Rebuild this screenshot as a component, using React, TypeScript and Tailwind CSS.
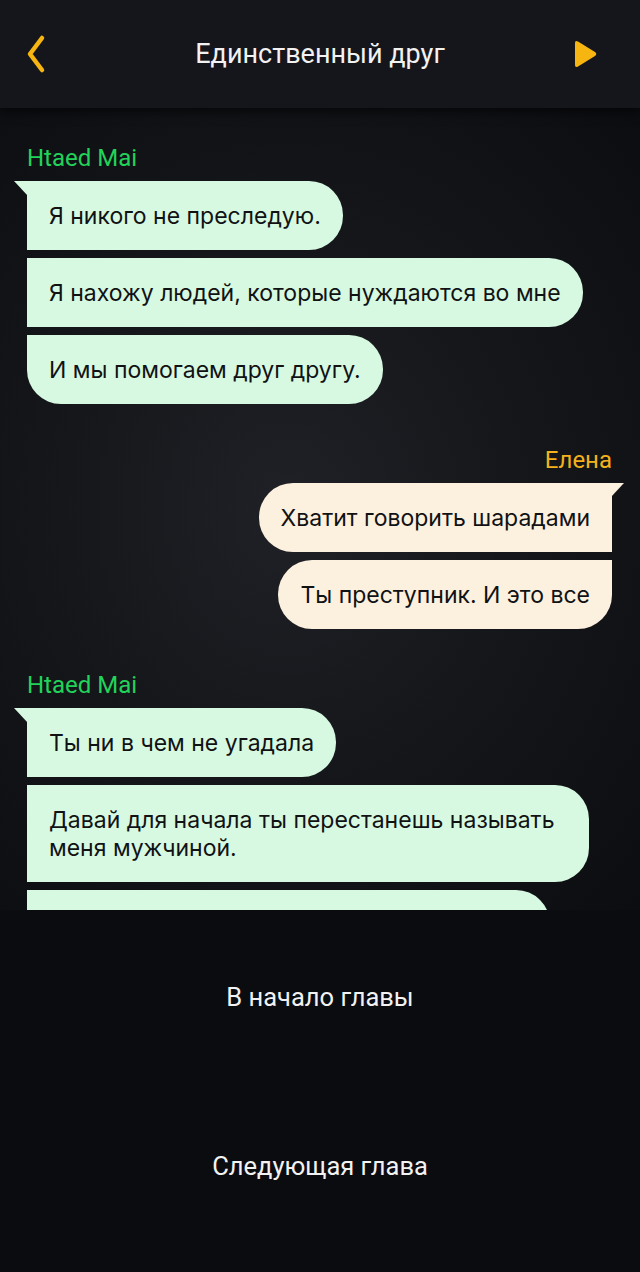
import React from "react";

type Side = "left" | "right";

function Tail({ side, color }: { side: Side; color: string }) {
  if (side === "left") {
    return (
      <svg className="absolute left-[-13px] top-0" width="14" height="15" viewBox="0 0 14 15">
        <path d="M14 0 H0 L14 15 Z" fill={color} />
      </svg>
    );
  }
  return (
    <svg className="absolute right-[-12px] top-0" width="13" height="14" viewBox="0 0 13 14">
      <path d="M0 0 H13 L0 14 Z" fill={color} />
    </svg>
  );
}

const GREEN = "#d8f9e1";
const CREAM = "#fcf0df";

const bubbleFont = { fontFamily: "Inter, 'Noto Sans', sans-serif" };

function LeftGroup({ name, msgs, clipLast }: { name: string; msgs: string[]; clipLast?: boolean }) {
  return (
    <div className="flex flex-col items-start pl-[27px]">
      <div className="text-[24px] leading-[24px] text-[#22d35a] mb-[11px]">{name}</div>
      <div className="flex flex-col items-start gap-[8px]">
        {msgs.map((m, i) => {
          const first = i === 0;
          const last = i === msgs.length - 1 && !clipLast;
          return (
            <div
              key={i}
              style={bubbleFont}
              className={
                "relative bg-[#d8f9e1] text-[#111214] text-[23px] leading-[28px] px-[22px] pt-[21px] pb-[20px] max-w-[562px] rounded-r-[34px] " +
                (last ? "rounded-bl-[34px]" : "")
              }
            >
              {first && <Tail side="left" color={GREEN} />}
              {m}
            </div>
          );
        })}
        {clipLast && <div className="h-[69px] w-[523px] bg-[#d8f9e1] rounded-r-[34px]" />}
      </div>
    </div>
  );
}

function RightGroup({ name, msgs }: { name: string; msgs: string[] }) {
  return (
    <div className="flex flex-col items-end pr-[28px]">
      <div className="text-[24px] leading-[24px] text-[#f3b21c] mb-[11px]">{name}</div>
      <div className="flex flex-col items-end gap-[8px]">
        {msgs.map((m, i) => {
          const first = i === 0;
          const last = i === msgs.length - 1;
          return (
            <div
              key={i}
              style={bubbleFont}
              className={
                "relative bg-[#fcf0df] text-[#111214] text-[23px] leading-[28px] px-[22px] pt-[21px] pb-[20px] max-w-[562px] rounded-l-[34px] " +
                (last ? "rounded-br-[34px]" : "")
              }
            >
              {first && <Tail side="right" color={CREAM} />}
              {m}
            </div>
          );
        })}
      </div>
    </div>
  );
}

export default function App() {
  return (
    <div
      className="w-[640px] h-[1272px] flex flex-col bg-[#0b0c10] overflow-hidden"
      style={{ fontFamily: "Roboto, 'Noto Sans', sans-serif" }}
    >
      <header className="relative z-10 h-[108px] shrink-0 bg-[#15161b] grid grid-cols-[1fr_auto_1fr] items-center px-[23px] shadow-[0_4px_10px_rgba(0,0,0,0.6)]">
        <svg width="24" height="40" viewBox="0 0 24 40">
          <path d="M19 4 L7 20 L19 36" fill="none" stroke="#f6b511" strokeWidth="4.5" strokeLinecap="round" strokeLinejoin="round" />
        </svg>
        <div className="text-[27px] text-[#f2f2f2]">Единственный друг</div>
        <div className="flex justify-end">
          <svg width="26" height="32" viewBox="0 0 26 32" className="mr-[17px]">
            <path d="M1 5 Q1 2 4 3.5 L21 14 Q23.5 16 21 18 L4 28.5 Q1 30 1 27 Z" fill="#f6b511" />
          </svg>
        </div>
      </header>
      <main className="h-[802px] shrink-0 overflow-hidden bg-[radial-gradient(ellipse_at_45%_50%,#1f2126_0%,#15171b_45%,#0c0d11_100%)] pt-[38px] flex flex-col gap-[44px]">
        <LeftGroup
          name="Htaed Mai"
          msgs={["Я никого не преследую.", "Я нахожу людей, которые нуждаются во мне", "И мы помогаем друг другу."]}
        />
        <RightGroup name="Елена" msgs={["Хватит говорить шарадами", "Ты преступник. И это все"]} />
        <LeftGroup
          name="Htaed Mai"
          msgs={["Ты ни в чем не угадала", "Давай для начала ты перестанешь называть меня мужчиной."]}
          clipLast
        />
      </main>
      <div className="flex flex-col items-center text-[25.5px] text-[#f2f2f2] pt-[72px]">
        <div className="leading-[30px]">В начало главы</div>
        <div className="leading-[30px] mt-[139px]">Следующая глава</div>
      </div>
    </div>
  );
}
